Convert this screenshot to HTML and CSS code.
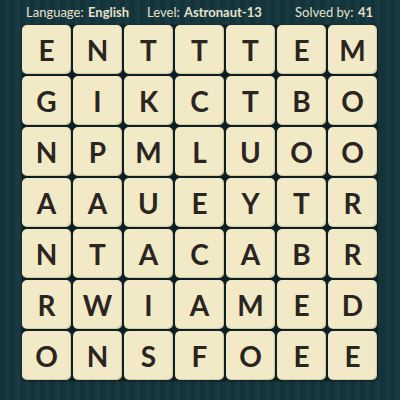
FILE: index.html
```html
<!DOCTYPE html>
<html>
<head>
	<title>Word puzzle</title>
	<link rel="stylesheet" href="styles.css">
</head>
<body>
	<div class="top">
		<span>Language: <b>English</b></span>
		<span class="level">Level: <b>Astronaut-13</b></span>
		<span class="solved">Solved by: <b>41</b></span>
	</div>

	<div class="board">
		<div class="tile">E</div><div class="tile">N</div><div class="tile">T</div><div class="tile">T</div><div class="tile">T</div><div class="tile">E</div><div class="tile">M</div>
		<div class="tile">G</div><div class="tile">I</div><div class="tile">K</div><div class="tile">C</div><div class="tile">T</div><div class="tile">B</div><div class="tile">O</div>
		<div class="tile">N</div><div class="tile">P</div><div class="tile">M</div><div class="tile">L</div><div class="tile">U</div><div class="tile">O</div><div class="tile">O</div>
		<div class="tile">A</div><div class="tile">A</div><div class="tile">U</div><div class="tile">E</div><div class="tile">Y</div><div class="tile">T</div><div class="tile">R</div>
		<div class="tile">N</div><div class="tile">T</div><div class="tile">A</div><div class="tile">C</div><div class="tile">A</div><div class="tile">B</div><div class="tile">R</div>
		<div class="tile">R</div><div class="tile">W</div><div class="tile">I</div><div class="tile">A</div><div class="tile">M</div><div class="tile">E</div><div class="tile">D</div>
		<div class="tile">O</div><div class="tile">N</div><div class="tile">S</div><div class="tile">F</div><div class="tile">O</div><div class="tile">E</div><div class="tile">E</div>
	</div>
</body>
</html>
```

FILE: styles.css
```css
html, body {
	margin: 0;
	height: 100%;
}

body {
	width: 400px;
	height: 400px;
	overflow: hidden;
	background: repeating-linear-gradient(90deg, #15333a 0px, #15333a 5px, #193a40 5px, #193a40 10px);
	font-family: Lato, "Open Sans", sans-serif;
}

.top {
	height: 25px;
	display: flex;
	align-items: center;
	padding: 0 27px 1px 26px;
	box-sizing: border-box;
	color: #e6e2cc;
	font-size: 13px;
	line-height: 1;
}

.top b {
	font-weight: 700;
	margin-left: 1px;
}

.level {
	margin-left: 18px;
}

.solved {
	margin-left: auto;
}

.board {
	margin-left: 22px;
	width: 355px;
	display: grid;
	grid-template-columns: repeat(7, 49px);
	grid-auto-rows: 49px;
	gap: 2px;
	background: #0b2024;
	border-radius: 5px;
	box-shadow: 1px 1px 3px rgba(0, 0, 0, 0.5);
}

.tile {
	background: #f2eac6;
	border-radius: 5px;
	box-shadow: inset -1px -1px 1px rgba(120, 100, 60, 0.25);
	display: flex;
	align-items: center;
	justify-content: center;
	color: #2a2521;
	font-size: 28px;
	font-weight: 700;
	padding-top: 1px;
	box-sizing: border-box;
}
```
